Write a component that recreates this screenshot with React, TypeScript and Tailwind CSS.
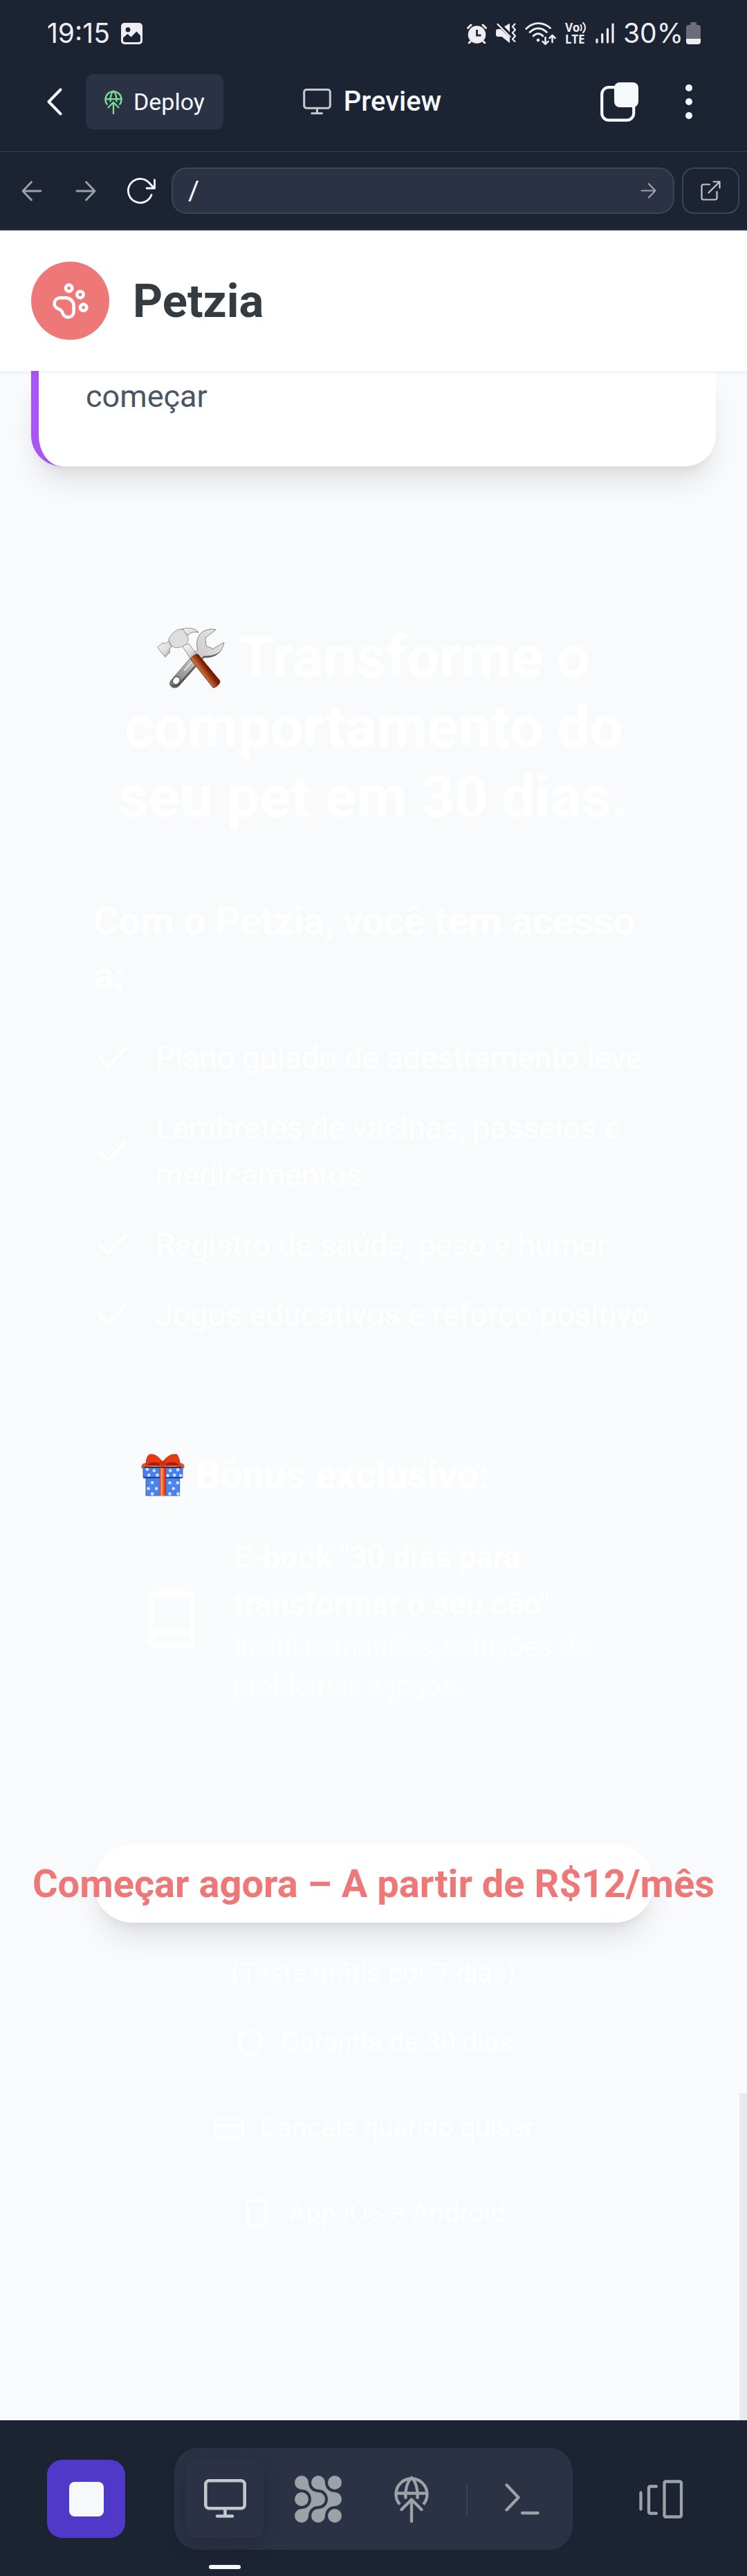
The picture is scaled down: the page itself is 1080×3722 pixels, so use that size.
import type { ReactNode } from "react";
import {
  Book,
  Check,
  PawPrint,
  Shield,
  Smartphone,
} from "lucide-react";

const benefits = [
  "Plano guiado de adestramento leve",
  "Lembretes de vacinas, passeios e medicamentos",
  "Registro de saúde, peso e humor",
  "Jogos educativos e reforço positivo",
];

function ImageIcon() {
  return (
    <svg width="31" height="31" viewBox="0 0 31 31" aria-hidden="true">
      <rect width="31" height="31" rx="5" fill="#eeeef2" />
      <circle cx="10" cy="10" r="3.4" fill="#1c2333" />
      <path d="M3 21.5 9.5 16l5 4.5 8-8 5.5 6v6.5a3 3 0 0 1-3 3H6a3 3 0 0 1-3-3z" fill="#1c2333" />
    </svg>
  );
}

function AlarmIcon() {
  return (
    <svg width="29" height="29" viewBox="0 0 29 29" fill="none" aria-hidden="true">
      <circle cx="14.5" cy="16" r="12.8" fill="#eeeef2" />
      <path d="M1.5 6.5 6 2M27.5 6.5 23 2M5 26l-2 2.5M24 26l2 2.5" stroke="#eeeef2" strokeWidth="3" strokeLinecap="round" />
      <path d="M14.5 9v8.2h6" stroke="#1c2333" strokeWidth="2.8" />
    </svg>
  );
}

function MuteIcon() {
  return (
    <svg width="29" height="30" viewBox="0 0 29 30" fill="none" aria-hidden="true">
      <path d="M20 .8v12.7l-8-8z" fill="#eeeef2" />
      <path d="M0 12a3 3 0 0 1 3-3h4l13 12v8.2L8.5 20H3a3 3 0 0 1-3-3z" fill="#eeeef2" />
      <path d="m2.5 2 18 18" stroke="#eeeef2" strokeWidth="2.4" strokeLinecap="round" />
      <path d="m28 1-4 4.5 4 4.5-4 4.5 4 4.5-4 4.5 4 4" stroke="#eeeef2" strokeWidth="2.3" strokeLinejoin="round" />
    </svg>
  );
}

function WifiIcon() {
  return (
    <svg width="45" height="34" viewBox="0 0 45 34" fill="none" stroke="#eeeef2" strokeLinecap="round" aria-hidden="true">
      <path d="M1.8 10.5C12 .2 26 .2 36.5 9.5" strokeWidth="2.8" />
      <path d="M7 15.6c7.5-7.5 17-7.5 24.5 0" strokeWidth="2.8" />
      <path d="M12 21c4.2-4.6 9.8-4.6 14 0" strokeWidth="2.8" />
      <circle cx="19" cy="27" r="2.3" fill="#eeeef2" stroke="none" />
      <path d="M29.5 23v9.5m-4-3.7 4 4 4-4M39.5 30V20m-4 4 4-4 4 4" strokeWidth="2.5" strokeLinejoin="round" />
    </svg>
  );
}

function VolteIcon() {
  return (
    <span className="flex w-8 flex-col font-['Noto_Sans'] text-[17px] leading-[17px] font-bold text-[#eeeef2]">
      <span className="flex items-center">
        Vo
        <svg width="10" height="16" viewBox="0 0 10 16" fill="none" stroke="#eeeef2" strokeWidth="2" strokeLinecap="round" aria-hidden="true">
          <path d="M1.5 4c1.8 2 1.8 6 0 8M5 1c4 4 4 10 0 14" />
        </svg>
      </span>
      <span>LTE</span>
    </span>
  );
}

function SignalIcon() {
  return (
    <svg width="27" height="30" viewBox="0 0 27 30" stroke="#eeeef2" strokeWidth="3.2" strokeLinecap="round" aria-hidden="true">
      <path d="M2 24v4M9.7 16.5V28M17.5 9v19M25 2v26" />
    </svg>
  );
}

function BatteryIcon() {
  return (
    <svg width="21" height="32" viewBox="0 0 21 32" aria-hidden="true">
      <path d="M6 4V2a2 2 0 0 1 2-2h5a2 2 0 0 1 2 2v2h2a4 4 0 0 1 4 4v16H0V8a4 4 0 0 1 4-4z" fill="#6b6e7a" />
      <path d="M0 24h21v4a4 4 0 0 1-4 4H4a4 4 0 0 1-4-4z" fill="#eeeef2" />
    </svg>
  );
}

function MonitorIcon({ className }: { className: string }) {
  return (
    <svg className={className} viewBox="0 0 61 57" fill="none" stroke="#c2c8cc" strokeLinecap="round" aria-hidden="true">
      <rect x="2.3" y="2.3" width="56.4" height="40" rx="5" strokeWidth="4.6" />
      <path d="M30.5 43v10M19 53.5h22" strokeWidth="4.6" />
    </svg>
  );
}

function DeployIcon({ className }: { className: string }) {
  return (
    <svg className={className} viewBox="0 0 50 68" fill="none" stroke="currentColor" strokeWidth="4.3" aria-hidden="true">
      <path d="M8 41.5A22.5 22.5 0 1 1 42 41.5M2.5 25.500h45" />
      <path d="M16.5 33.5C15 22 18.5 9 25 3c6.5 6 10 19 8.5 30.5" />
      <path d="M25 66V34.5M10.5 49 25 34.5 39.5 49" strokeLinecap="round" strokeLinejoin="round" />
    </svg>
  );
}

function ArrowIcon({ className, back = false }: { className: string; back?: boolean }) {
  return (
    <svg className={className} viewBox="0 0 30 30" fill="none" stroke="#9da2a6" strokeWidth="2.8" strokeLinecap="round" strokeLinejoin="round" aria-hidden="true">
      {back ? <path d="M28 15H2M14.5 2 2 15l12.5 13" /> : <path d="M2 15h26M15.5 2 28 15 15.5 28" />}
    </svg>
  );
}

function RefreshIcon() {
  return (
    <svg width="41" height="39" viewBox="0 0 41 39" fill="none" stroke="#f5f9fc" strokeWidth="2.8" strokeLinecap="round" strokeLinejoin="round" aria-hidden="true">
      <path d="M35 25.5A17.3 17.3 0 1 1 31.5 8l7 7.5" />
      <path d="M39.5 4v12H28" />
    </svg>
  );
}

function ExternalIcon() {
  return (
    <svg width="29" height="29" viewBox="0 0 29 29" fill="none" stroke="#c2c8cc" strokeWidth="2.2" strokeLinecap="round" strokeLinejoin="round" aria-hidden="true">
      <path d="M13 5.5H4A2.5 2.5 0 0 0 1.5 8v17A2.5 2.5 0 0 0 4 27.5h17a2.5 2.5 0 0 0 2.5-2.5v-9M11.5 17.5l16-16M18.5 1.5h9v9" />
    </svg>
  );
}

function TabsIcon() {
  return (
    <svg width="56" height="58" viewBox="0 0 56 58" aria-hidden="true">
      <rect x="2.2" y="8.2" width="46" height="47.5" rx="10" fill="none" stroke="#f5f9fc" strokeWidth="4.2" />
      <rect x="20" y="1" width="35" height="36" rx="8" fill="#f5f9fc" />
    </svg>
  );
}

function GridIcon() {
  return (
    <svg width="68" height="68" viewBox="0 0 68 68" fill="#9da2a6" aria-hidden="true">
      <circle cx="10" cy="34" r="10" />
      <circle cx="58" cy="10" r="10" />
      <circle cx="58" cy="58" r="10" />
      <path d="M10 0a10 10 0 0 1 10 10c0 8 6 14 14 14a10 10 0 0 1 0 20c-8 0-14 6-14 14a10 10 0 1 1-10-10c8 0 14-6 14-14s-6-14-14-14a10 10 0 0 1 0-20z" />
      <path d="M34 0a10 10 0 0 1 10 10c0 8 6 14 14 14a10 10 0 0 1 0 20c-8 0-14 6-14 14a10 10 0 1 1-10-10c8 0 14-6 14-14s-6-14-14-14a10 10 0 0 1 0-20z" />
    </svg>
  );
}

function TerminalIcon() {
  return (
    <svg width="50" height="46" viewBox="0 0 50 46" fill="none" stroke="#9da2a6" strokeWidth="4.3" strokeLinecap="round" strokeLinejoin="round" aria-hidden="true">
      <path d="m2.5 2.5 17 18-17 18M25 43h22.5" />
    </svg>
  );
}

function PanesIcon() {
  return (
    <svg width="64" height="56" viewBox="0 0 64 56" fill="none" stroke="#9da2a6" strokeWidth="4.3" strokeLinecap="round" aria-hidden="true">
      <path d="M2.5 18.5v24M25 9.5h-9a2 2 0 0 0-2 2v35a2 2 0 0 0 2 2h9" />
      <rect x="36.5" y="2.5" width="24.5" height="51" rx="2" />
    </svg>
  );
}

function ToolsEmoji() {
  return (
    <svg className="inline-block h-[90px] w-[98px] align-[-18px]" viewBox="8 32 296 266" preserveAspectRatio="xMinYMid meet" role="img" aria-label="🛠️" overflow="visible">
      <defs>
        <linearGradient id="steel" x1="0" y1="0" x2="1" y2="1">
          <stop offset="0" stopColor="#fafafa" />
          <stop offset=".6" stopColor="#dcdcdc" />
          <stop offset="1" stopColor="#8c8c8c" />
        </linearGradient>
        <linearGradient id="spanner" x1="1" y1="0" x2="0" y2="1">
          <stop offset="0" stopColor="#ececec" />
          <stop offset=".55" stopColor="#c4c4c4" />
          <stop offset="1" stopColor="#707070" />
        </linearGradient>
        <linearGradient id="wood" gradientUnits="userSpaceOnUse" x1="190" y1="225" x2="238" y2="190">
          <stop offset="0" stopColor="#8a2c06" />
          <stop offset=".45" stopColor="#d07840" />
          <stop offset="1" stopColor="#7a1d02" />
        </linearGradient>
      </defs>
      <g strokeLinejoin="round" transform="translate(-25 0)">
        <path d="M290 41c-15-6-52-3-70 20-14 20-16 45-10 66L92 264c-8 14 0 28 14 30 10 1 18-1 26-11L238 162c36 2 78-12 88-66l-48 28-30-12-4-36z" fill="url(#spanner)" stroke="#6d6d6d" strokeWidth="2.5" />
        <path d="M95 279c4 14 24 17 36 4L238 162c30 2 62-8 78-34-16 20-44 28-80 27L126 276c-10 10-22 10-31 3z" fill="#3f3f3f" opacity=".75" />
        <path d="m184 176-34 38c-4 6 2 10 8 6l34-40z" fill="#e2e2e2" stroke="#8d8d8d" strokeWidth="2" />
        <ellipse cx="117" cy="263" rx="15" ry="18" transform="rotate(35 117 263)" fill="#f9fafc" stroke="#555" strokeWidth="4" />
        <path d="m142 110 30-8 34 44-26 22z" fill="url(#steel)" stroke="#777" strokeWidth="2.5" />
        <path d="M140 38c32-8 60-4 75 15-22-6-38 0-46 14z" fill="url(#steel)" stroke="#777" strokeWidth="2.5" />
        <path d="M84 84c6-20 24-38 48-46l16 2 22 38c0 18-10 30-32 38-20 6-34 2-44-8z" fill="#dedede" stroke="#888" strokeWidth="2.5" />
        <path d="m35 118 22-20 12 4 14-12 14 26-10 10 2 14-20 20z" fill="url(#steel)" stroke="#777" strokeWidth="2.5" />
        <path d="M180 170c4-12 20-22 32-22l96 116c0 14-14 28-30 30z" fill="url(#wood)" stroke="#6b1a02" strokeWidth="2.5" />
      </g>
    </svg>
  );
}

function GiftEmoji() {
  const lidDots = [[53, 97], [83, 102], [154, 102], [187, 99], [60, 122], [97, 122], [143, 124], [172, 122], [200, 124]];
  const boxDots = [[75, 155], [58, 181], [93, 181], [75, 204], [152, 156], [186, 156], [168, 181], [152, 204], [188, 204]];
  return (
    <svg className="inline-block h-[62px] w-[66px] align-[-12px]" viewBox="23 28 200 186" preserveAspectRatio="xMinYMid meet" role="img" aria-label="🎁">
      <defs>
        <linearGradient id="ribbon" x1="0" y1="0" x2="1" y2="0">
          <stop offset="0" stopColor="#cf2f0c" />
          <stop offset=".3" stopColor="#ff9a6e" />
          <stop offset=".65" stopColor="#f2511f" />
          <stop offset="1" stopColor="#c42807" />
        </linearGradient>
      </defs>
      <path d="M28 92c-4-16 8-24 22-22l-8 22zM214 92c6-16-6-24-20-22l6 22z" fill="#d9572b" />
      <path d="M47 132h148v80H47z" fill="#4a82ee" stroke="#27499b" strokeWidth="2" />
      <path d="M35 88h173v44H35z" fill="#4780ee" stroke="#27499b" strokeWidth="2" />
      <path d="M36 131h171v5H36z" fill="#1f3c86" />
      <g fill="#d3e4ff">
        {[...lidDots, ...boxDots].map(([x, y]) => (
          <circle key={`${x}-${y}`} cx={x} cy={y} r="7" />
        ))}
      </g>
      <path d="M107 88h28v124h-28z" fill="url(#ribbon)" />
      <path d="M42 84h160v6H42z" fill="#5d1408" />
      <path d="M120 68C104 36 76 26 60 33 50 44 46 64 47 82l60-4c8 0 18 0 26 0l64 4c0-22-6-40-14-50-20-6-48 8-63 36z" fill="#e83a12" stroke="#a31d04" strokeWidth="2" />
      <path d="M52 78c14-16 40-14 56-6v10zM192 78c-14-16-42-14-58-6v10z" fill="#a61c06" />
      <rect x="107" y="60" width="27" height="23" rx="7" fill="#d72c0a" />
    </svg>
  );
}

function WindowIcon() {
  return (
    <svg className="size-[45px]" viewBox="0 0 24 24" fill="none" stroke="currentColor" strokeWidth="2" aria-hidden="true">
      <rect x="2" y="5" width="21" height="14.5" rx="2" />
      <path d="M2 10h21" />
    </svg>
  );
}

function Assurance({ icon, children }: { icon: ReactNode; children: ReactNode }) {
  return (
    <li className="flex items-center justify-center gap-[23px]">
      {icon}
      <span>{children}</span>
    </li>
  );
}

export default function App() {
  return (
    <div className="flex min-h-screen flex-col bg-[#f9fafc] font-[Roboto,sans-serif]">
      <div className="bg-[#1c2333] text-[#f5f9fc]">
        <div className="flex h-[76px] items-center justify-between pt-5 pr-[67px] pl-[68px] font-[Inter,sans-serif] text-[39px] leading-[40px] text-[#eeeef2]">
          <div className="flex items-center gap-4">
            <span>19:15</span>
            <ImageIcon />
          </div>
          <div className="flex items-center gap-[13px]">
            <AlarmIcon />
            <MuteIcon />
            <WifiIcon />
            <div className="flex items-center gap-3">
              <VolteIcon />
              <SignalIcon />
            </div>
            <div className="flex items-center gap-1">
              <span>30%</span>
              <BatteryIcon />
            </div>
          </div>
        </div>

        <div className="grid h-36 grid-cols-[1fr_auto_1fr] items-center border-b-2 border-[#2b3245] pr-[72px] pl-[68px]">
          <div className="flex items-center gap-[34px]">
            <button type="button" aria-label="Voltar">
              <svg width="22" height="40" viewBox="0 0 22 40" fill="none" stroke="#f5f9fc" strokeWidth="4" strokeLinecap="round" strokeLinejoin="round" aria-hidden="true">
                <path d="M19.5 2.5 2.5 20l17 17.5" />
              </svg>
            </button>
            <button type="button" className="flex h-20 items-center gap-4 rounded-[11px] bg-[#2b3245] px-[27px] text-[34px] leading-[40px]">
              <DeployIcon className="h-[35px] w-[26px] text-[#7ee094]" />
              Deploy
            </button>
          </div>
          <h1 className="flex items-center gap-[18px] text-[40px] leading-[46px] font-medium">
            <MonitorIcon className="h-[38px] w-[41px]" />
            Preview
          </h1>
          <div className="flex items-center justify-end gap-[60px]">
            <button type="button" aria-label="Abas">
              <TabsIcon />
            </button>
            <button type="button" aria-label="Mais opções">
              <svg width="24" height="50" viewBox="0 0 24 50" fill="#f5f9fc" aria-hidden="true">
                <circle cx="12" cy="5" r="5" />
                <circle cx="12" cy="25" r="5" />
                <circle cx="12" cy="45" r="5" />
              </svg>
            </button>
          </div>
        </div>

        <div className="flex h-[113px] items-center border-b-2 border-[#2b3245] pr-[11px] pl-[31px]">
          <div className="flex items-center pr-[23px]">
            <button type="button" aria-label="Página anterior">
              <ArrowIcon back className="size-[30px]" />
            </button>
            <button type="button" aria-label="Próxima página" className="ml-12">
              <ArrowIcon className="size-[30px]" />
            </button>
            <button type="button" aria-label="Recarregar" className="ml-[45px]">
              <RefreshIcon />
            </button>
          </div>
          <form className="flex h-[67px] flex-1 items-center rounded-[22px] border-2 border-[#3c445c] bg-[#2b3245] pr-6 pl-[22px]" onSubmit={(e) => e.preventDefault()}>
            <input aria-label="Endereço" defaultValue="/" className="h-full min-w-0 flex-1 bg-transparent text-[39px] leading-[46px] outline-none" />
            <button type="submit" aria-label="Ir">
              <ArrowIcon className="size-[23px]" />
            </button>
          </form>
          <button type="button" aria-label="Abrir em nova aba" className="ml-[11px] flex h-[67px] w-[83px] items-center justify-center rounded-[17px] border-2 border-[#3c445c]">
            <ExternalIcon />
          </button>
        </div>
      </div>

      <header className="relative z-10 flex items-center gap-[34px] bg-white px-[45px] py-[45px] shadow-[0_3px_6px_rgba(0,0,0,0.05)]">
        <span className="flex size-[113px] items-center justify-center rounded-full bg-[#ee7777] text-white">
          <PawPrint className="size-14" strokeWidth={2} />
        </span>
        <span className="text-[67px] leading-[90px] font-bold text-[#343c42]">Petzia</span>
      </header>

      <main className="relative flex-1 px-[45px] text-white">
        <article className="rounded-b-[45px] border-l-[11px] border-[#a855f7] bg-white px-[68px] pt-[3px] pb-[67px] shadow-[0_28px_42px_-8px_rgba(0,0,0,0.1),0_11px_17px_-11px_rgba(0,0,0,0.1)]">
          <p className="text-[45px] leading-[68px] text-[#4b5563]">começar</p>
        </article>

        <section className="px-[90px] pt-[225px]">
          <h2 className="text-center text-[84px] leading-[101px] font-bold">
            <ToolsEmoji /> Transforme o comportamento do seu pet em 30 dias.
          </h2>

          <h3 className="mt-[90px] text-[56px] leading-[79px] font-semibold">Com o Petzia, você tem acesso a:</h3>
          <ul className="mt-[45px] flex flex-col gap-[33px] text-[45px] leading-[68px]">
            {benefits.map((item) => (
              <li key={item} className="flex items-center gap-[34px]">
                <Check className="size-14 shrink-0" strokeWidth={2} />
                <span>{item}</span>
              </li>
            ))}
          </ul>

          <div className="mt-[90px] rounded-[45px] bg-[#fafbfd] px-[68px] pt-[68px] pb-[113px]">
            <h3 className="text-[56px] leading-[79px] font-bold">
              <GiftEmoji /> Bônus exclusivo:
            </h3>
            <div className="mt-[45px] flex items-center gap-[45px]">
              <Book className="size-[90px] shrink-0" strokeWidth={2} />
              <div>
                <p className="text-[45px] leading-[68px] font-semibold">E-book "30 dias para transformar o seu cão"</p>
                <p className="text-[39px] leading-[56px] text-[#fefeff]">Inclui comandos, soluções de problemas e jogos.</p>
              </div>
            </div>
          </div>

          <button type="button" className="mt-[88px] flex h-[113px] w-full items-center justify-center rounded-full bg-white text-[56px] font-bold whitespace-nowrap text-[#ee7777] shadow-[0_28px_42px_-8px_rgba(0,0,0,0.1),0_11px_17px_-11px_rgba(0,0,0,0.1)]">
            Começar agora – A partir de R$12/mês
          </button>
          <p className="mt-[45px] text-center text-[39px] leading-[56px] text-[#fefeff]">(Teste grátis por 7 dias)</p>
          <ul className="mt-[39px] flex flex-col gap-[56px] text-[39px] leading-[67px] text-[#fefeff]">
            <Assurance icon={<Shield className="size-[45px]" strokeWidth={2} />}>Garantia de 30 dias</Assurance>
            <Assurance icon={<WindowIcon />}>Cancele quando quiser</Assurance>
            <Assurance icon={<Smartphone className="size-[45px]" strokeWidth={2} />}>App iOS e Android</Assurance>
          </ul>
        </section>
        <div className="absolute right-0 bottom-0 h-[473px] w-[11px] bg-[#e9eaec]" />
      </main>

      <nav className="flex h-[225px] bg-[#1c2333] pt-10 pr-9 pl-[68px]">
        <button type="button" aria-label="Parar" className="mt-[17px] mr-[71px] flex size-[113px] items-center justify-center rounded-[22px] bg-[#5038c8]">
          <span className="size-[50px] rounded-lg bg-[#f5f9fc]" />
        </button>
        <div className="flex h-[147px] items-center gap-[23px] rounded-[34px] bg-[#2b3245] px-[17px] text-[#9da2a6]">
          <button type="button" aria-label="Preview" aria-current="page" className="relative flex h-[113px] w-28 items-center justify-center rounded-[11px] bg-[#2b3245] shadow-[0_6px_28px_rgba(20,22,38,0.3)]">
            <MonitorIcon className="h-[57px] w-[61px]" />
            <span className="absolute -bottom-[45px] h-[6px] w-[46px] rounded-full bg-[#f5f9fc]" />
          </button>
          <button type="button" aria-label="Agente" className="flex h-[113px] w-28 items-center justify-center">
            <GridIcon />
          </button>
          <button type="button" aria-label="Deploy" className="flex h-[113px] w-28 items-center justify-center">
            <DeployIcon className="h-[68px] w-[50px]" />
          </button>
          <span className="h-[46px] w-0.5 bg-[#3c445c]" />
          <button type="button" aria-label="Shell" className="flex h-[113px] w-28 items-center justify-center">
            <TerminalIcon />
          </button>
        </div>
        <button type="button" aria-label="Painéis" className="mt-[17px] ml-auto flex h-[113px] w-[176px] items-center justify-center">
          <PanesIcon />
        </button>
      </nav>
    </div>
  );
}
